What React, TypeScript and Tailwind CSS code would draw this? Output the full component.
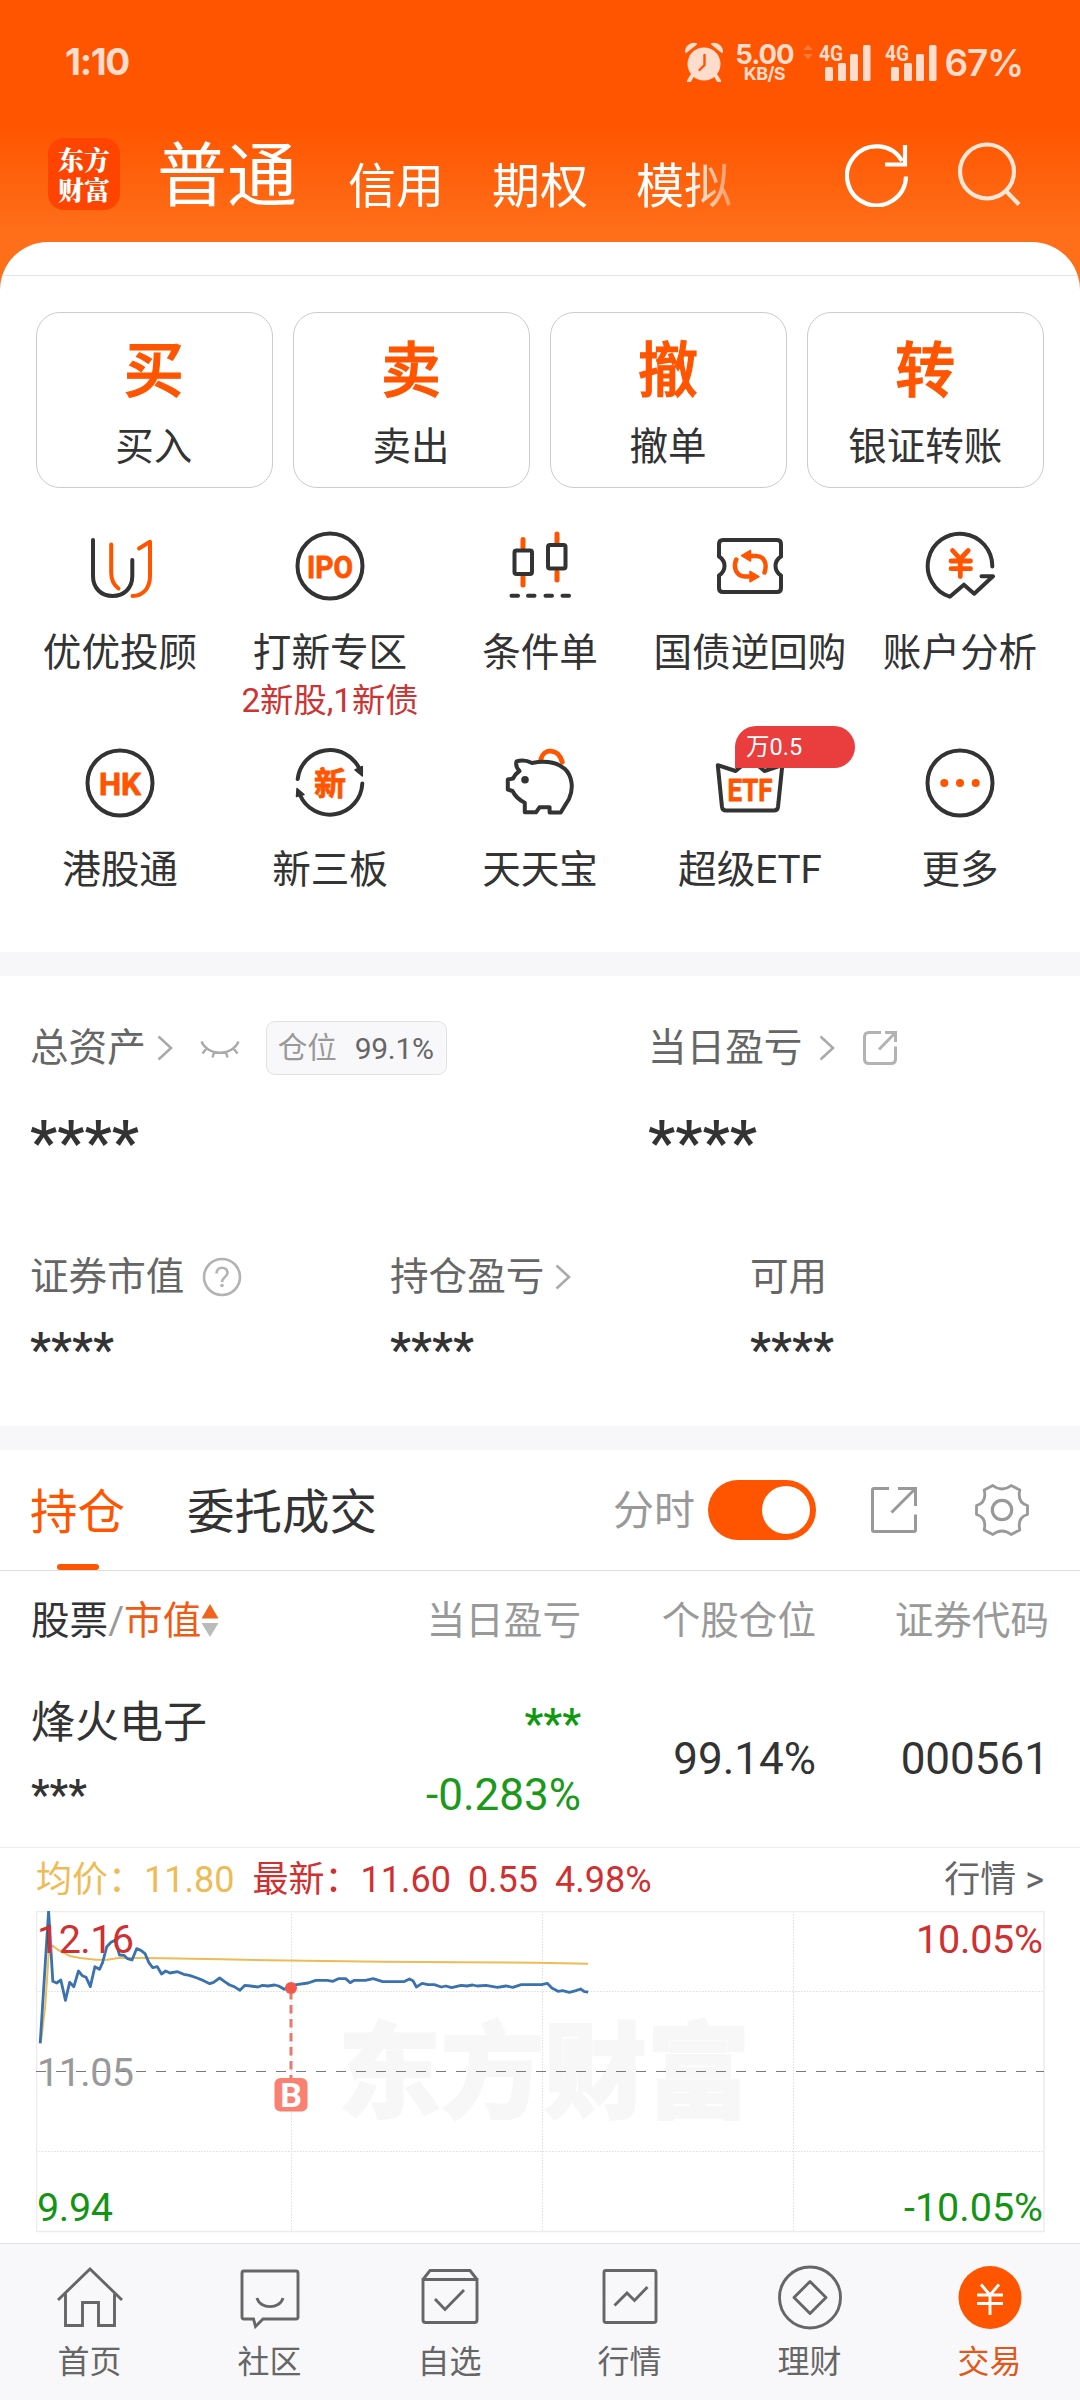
import type { ReactNode } from "react";

const DARK = "#333333";
const ORANGE = "#ff5500";

/* ---------- status bar ---------- */

function AlarmIcon() {
  return (
    <svg width="38" height="40" viewBox="0 0 38 40" fill="none">
      <path d="M7 34l-3 5M31 34l3 5" stroke="#ffdccb" strokeWidth="4" strokeLinecap="round" />
      <path d="M1 10A8 8 0 0 1 11 2ZM37 10A8 8 0 0 0 27 2Z" fill="#ffdccb" stroke="#ffdccb" strokeWidth="2" strokeLinejoin="round" />
      <circle cx="19" cy="22" r="16.5" fill="#ffdccb" />
      <path d="M19.5 13v10l-5 5" stroke="#ff5500" strokeWidth="2.4" strokeLinecap="round" />
    </svg>
  );
}

function Signal() {
  return (
    <svg className="overflow-visible" width="52" height="38" viewBox="0 0 52 38" fill="#ffdccb">
      <text x="0" y="17.5" fontSize="22.5" fontWeight="700" fontFamily="Roboto" textLength="24" lengthAdjust="spacingAndGlyphs">
        4G
      </text>
      <rect x="6" y="24" width="8" height="14" rx="1.5" />
      <rect x="19" y="20" width="8" height="18" rx="1.5" />
      <rect x="31" y="11" width="8" height="27" rx="1.5" />
      <rect x="44" y="2" width="7.5" height="36" rx="1.5" />
    </svg>
  );
}

function StatusBar() {
  return (
    <div className="flex h-[124px] items-center pr-[57px] pl-[65px] font-['Inter'] text-[#ffdccb]">
      <span className="w-[70px] text-[37px] leading-[40px] font-bold tracking-[-1.3px]">1:10</span>
      <div className="ml-auto flex items-center">
        <AlarmIcon />
        <div className="ml-[11px] flex w-[60px] flex-col items-center">
          <span className="text-[27.5px] leading-[24px] font-bold tracking-[-1px]">5.00</span>
          <span className="text-[18px] leading-[16px] font-bold tracking-[-0.6px]">KB/S</span>
        </div>
        <svg className="mt-[-20px] ml-[8px]" width="12" height="16" viewBox="0 0 12 16" fill="#ff7a3c">
          <path d="M6 1l5 5H1ZM6 15l5-5H1Z" />
        </svg>
        <span className="ml-[5px]">
          <Signal />
        </span>
        <span className="ml-[14px]">
          <Signal />
        </span>
        <span className="ml-[7px] pt-[2px] text-[37px] leading-[40px] font-semibold tracking-[-1.2px]">67%</span>
      </div>
    </div>
  );
}

/* ---------- title bar ---------- */

function TitleBar() {
  return (
    <div className="flex h-[100px] items-center pl-[48px] text-white">
      <div className="flex size-[72px] flex-col items-center justify-center rounded-[16px] bg-[#ff4300] font-['Noto_Serif_CJK_SC','Noto_Sans_CJK_SC',sans-serif] text-[26px] leading-[30px] font-black">
        <span>东方</span>
        <span>财富</span>
      </div>
      <span className="ml-[37px] pt-[6px] text-[70px] leading-[94px]">普通</span>
      <div className="mt-[26px] ml-[51px] flex w-[390px] gap-[48px] [mask-image:linear-gradient(to_right,black_340px,transparent_405px)] text-[48px] leading-[78px] whitespace-nowrap">
        <span>信用</span>
        <span>期权</span>
        <span>模拟</span>
      </div>
      <svg className="mt-[2px] ml-[107px]" width="64" height="64" viewBox="0 0 64 64" fill="none" stroke="white" strokeWidth="4.2">
        <path d="M61 33.500A29.500 29.500 0 1 1 57 18" />
        <path d="M60 2v19.500H40" />
      </svg>
      <svg className="ml-[48px]" width="66" height="66" viewBox="0 0 66 66" fill="none" stroke="#ffe6d6" strokeWidth="4.200">
        <circle cx="30" cy="30.500" r="27" />
        <path d="M49 50L62 63.500" />
      </svg>
    </div>
  );
}

/* ---------- trade shortcuts ---------- */

const TRADE = [
  ["买", "买入"],
  ["卖", "卖出"],
  ["撤", "撤单"],
  ["转", "银证转账"],
];

function TradeCards() {
  return (
    <div className="mt-[36px] grid grid-cols-4 gap-[20.500px] px-[36px]">
      {TRADE.map(([glyph, label]) => (
        <div key={label} className="flex h-[176px] flex-col items-center rounded-[24px] border border-[#cccccc] pr-[1px]">
          <span className="mt-[21px] text-[60px] leading-[76px] font-medium text-[#ff5500] [-webkit-text-stroke:1.2px_#ff5500]">{glyph}</span>
          <span className="mt-[10px] text-[38.500px] leading-[54px] text-[#333333]">{label}</span>
        </div>
      ))}
    </div>
  );
}

function Glyph({ children }: { children: ReactNode }) {
  return (
    <svg width="72" height="72" viewBox="0 0 72 72" fill="none" stroke={DARK} strokeWidth="4" strokeLinecap="round" strokeLinejoin="round">
      {children}
    </svg>
  );
}

function IconText({ text, width, baseline, size }: { text: string; width: number; baseline: number; size: number }) {
  return (
    <text
      x={36 - width / 2}
      y={baseline}
      fontSize={size}
      fontWeight="700"
      fontFamily="Roboto, 'Noto Sans CJK SC', sans-serif"
      fill={ORANGE}
      stroke={ORANGE}
      strokeWidth="0.8"
      textLength={width}
      lengthAdjust="spacingAndGlyphs"
    >
      {text}
    </text>
  );
}

const youyou = (
  <Glyph>
    <path d="M9 10V46C9 58 17 66 28.600 66S48.300 58 48.300 46V30" />
    <path d="M27.200 14.500V43C27.200 50 30 55 34.500 58.500M55 18.500L66 11.800V46C66 58 59 66 48.500 66" stroke={ORANGE} />
  </Glyph>
);
const ipo = (
  <Glyph>
    <circle cx="36" cy="36" r="32.500" />
    <IconText text="IPO" width={46} baseline={47.5} size={32} />
  </Glyph>
);
const candles = (
  <Glyph>
    <path d="M19 9.500V18M19 47V55M53 4V13M53 42V50" stroke={ORANGE} strokeWidth="5" />
    <rect x="10.500" y="20.500" width="17.500" height="23.500" rx="2" />
    <rect x="44" y="15" width="17.500" height="23.500" rx="2" />
    <path d="M7.500 65.700H14M24 65.700H30.500M41.500 65.700H48M58.500 65.700H65" />
  </Glyph>
);
const repo = (
  <Glyph>
    <path d="M9 10H63Q67 10 67 14V26.500Q61.500 30 61.500 36T67 45.500V58Q67 62 63 62H9Q5 62 5 58V45.500Q10.500 42 10.500 36T5 26.500V14Q5 10 9 10Z" />
    <path d="M37 26H42C49 26 54 32 50.500 42.500M35 46.500H31C23 46.500 18.500 38 22.300 29.500" stroke={ORANGE} strokeWidth="4.500" />
    <path d="M27.500 25.700L36.500 20.500V31ZM45 46.700L36 41.500V51.800Z" fill={ORANGE} stroke={ORANGE} strokeWidth="1.500" />
  </Glyph>
);
const analysis = (
  <Glyph>
    <path d="M68.300 36.500A32.300 32.300 0 1 0 25.800 66.700L39.900 54.700L50.200 63.700L69 46.300H57.500" />
    <path d="M28.500 20.500L36.300 29L44.200 20.500M27 31H46.500M27 38.700H46.500M36.300 29V46.500" stroke={ORANGE} strokeWidth="4.800" />
  </Glyph>
);
const hk = (
  <Glyph>
    <circle cx="36" cy="36" r="32.500" />
    <IconText text="HK" width={42} baseline={47.5} size={32} />
  </Glyph>
);
const newBoard = (
  <Glyph>
    <path d="M3.700 32A32.500 32.500 0 0 1 65.500 22M68.300 36.500A32.500 32.500 0 0 1 6 48" />
    <path d="M61 23L68.300 19.500V29ZM3 41.500L10 47.500L2.500 49.500Z" fill={DARK} strokeWidth="1.500" />
    <IconText text="新" width={32} baseline={47.5} size={32} />
  </Glyph>
);
const piggy = (
  <Glyph>
    <path d="M37 12C39 2 54 0 58.200 15" stroke={ORANGE} strokeWidth="5" />
    <path d="M12.500 14.500C18 12.800 23 13.500 28 16C44 13 54 16 61 22C68 29 70 41 65 52L56.700 65.500H45.600V60.300H35.500L32 65.300H20.800V55.700C15 53 11 49 8.500 44L3.800 42.500V32.500L9 31.500C10.500 28.500 12.500 26 15.500 24C13 21.500 11.500 18 12.500 14.500Z" />
    <circle cx="21" cy="32.700" r="3.800" fill={DARK} stroke="none" />
  </Glyph>
);
const etf = (
  <Glyph>
    <path d="M3.800 18.200L21.600 24L36 12L50.500 24L68.300 18.200L64 60Q63.500 63.500 60 63.500H12Q8.500 63.500 8 60Z" />
    <IconText text="ETF" width={45} baseline={53.5} size={31} />
  </Glyph>
);
const more = (
  <Glyph>
    <circle cx="36" cy="36" r="32.500" />
    <g fill={ORANGE} stroke="none">
      <circle cx="20.300" cy="36" r="4" />
      <circle cx="36" cy="36" r="4" />
      <circle cx="51.700" cy="36" r="4" />
    </g>
  </Glyph>
);

const SHORTCUTS: { icon: ReactNode; label: string; note?: string; badge?: string }[][] = [
  [
    { icon: youyou, label: "优优投顾" },
    { icon: ipo, label: "打新专区", note: "2新股,1新债" },
    { icon: candles, label: "条件单" },
    { icon: repo, label: "国债逆回购" },
    { icon: analysis, label: "账户分析" },
  ],
  [
    { icon: hk, label: "港股通" },
    { icon: newBoard, label: "新三板" },
    { icon: piggy, label: "天天宝" },
    { icon: etf, label: "超级ETF", badge: "万0.5" },
    { icon: more, label: "更多" },
  ],
];

function Shortcuts() {
  return (
    <div className="mt-[42px] px-[15px]">
      {SHORTCUTS.map((row, i) => (
        <div key={i} className="grid h-[217px] grid-cols-5">
          {row.map((item) => (
            <div key={item.label} className="flex flex-col items-center whitespace-nowrap">
              <div className="relative">
                {item.icon}
                {item.badge && (
                  <span className="absolute top-[-21px] left-[21px] h-[42px] w-[120px] rounded-[21px] rounded-bl-none bg-[#ea3d3d] pl-[11px] text-[23.500px] leading-[43px] text-white">
                    {item.badge}
                  </span>
                )}
              </div>
              <span className="mt-[24px] text-[38.600px] leading-[54px] text-[#333333]">{item.label}</span>
              {item.note && <span className="text-[33.300px] leading-[42px] text-[#cc3333]">{item.note}</span>}
            </div>
          ))}
        </div>
      ))}
    </div>
  );
}

/* ---------- assets ---------- */

function Chevron() {
  return (
    <svg width="16" height="26" viewBox="0 0 16 26" fill="none" stroke="#aaaaaa" strokeWidth="2.600">
      <path d="M1.500 1.500L14 13L1.500 24.500" />
    </svg>
  );
}

function Assets() {
  return (
    <section className="h-[450px] px-[30px] pt-[45px] text-[38.600px] text-[#666666]">
      <div className="flex h-[54px] items-center">
        <div className="flex w-[617px] items-center">
          <span className="mr-[11px] leading-[54px]">总资产</span>
          <Chevron />
          <svg className="mt-[4px] ml-[27px]" width="40" height="20" viewBox="0 0 40 20" fill="none" stroke="#aaaaaa" strokeWidth="2.400">
            <path d="M1.500 1.500C8 16.500 32 16.500 38.500 1.500M6.500 8.500L2.500 13.500M14 12.500L12.500 17.500M26 12.500L27.500 17.500M33.500 8.500L37.500 13.500" />
          </svg>
          <div className="ml-[26px] flex h-[54px] w-[181px] items-center rounded-[9px] border border-[#e2e2e5] bg-[#f8f8fa] pl-[11px] text-[29.500px] whitespace-nowrap">
            <span className="text-[#999999]">仓位</span>
            <span className="ml-[18px] text-[30px] tracking-[-0.3px]">99.1%</span>
          </div>
        </div>
        <span className="mr-[17px] ml-[1px] leading-[54px]">当日盈亏</span>
        <Chevron />
        <svg className="ml-[27px]" width="36" height="36" viewBox="0 0 36 36" fill="none" stroke="#b3b3b3" strokeWidth="3">
          <path d="M19 2.500H7Q2.500 2.500 2.500 7V29Q2.500 33.500 7 33.500H29Q33.500 33.500 33.500 29V16.500M23 2.500H33.500V12M33 3L17 19.500" />
        </svg>
      </div>
      <div className="mt-[38px] flex h-[60px] text-[61.500px] leading-[61px] font-medium text-[#333333]">
        <span className="w-[618px]">****</span>
        <span>****</span>
      </div>
      <div className="mt-[77px] grid grid-cols-[360px_360px_1fr] leading-[54px]">
        <span className="flex items-center">
          证券市值
          <svg className="ml-[18px]" width="40" height="40" viewBox="0 0 40 40" fill="none" stroke="#b3b3b3" strokeWidth="2.600">
            <circle cx="20" cy="20" r="18" />
            <path d="M14.500 16.500C14.500 9 25.500 9 25.500 16C25.500 20 20 20 20 25" />
            <circle cx="20" cy="28.500" r="1.800" fill="#b3b3b3" stroke="none" />
          </svg>
        </span>
        <span className="flex items-center">
          持仓盈亏
          <span className="ml-[11px]">
            <Chevron />
          </span>
        </span>
        <span>可用</span>
      </div>
      <div className="mt-[22px] grid h-[48px] grid-cols-[360px_360px_1fr] text-[47.300px] leading-[48px] font-medium text-[#333333]">
        <span>****</span>
        <span>****</span>
        <span>****</span>
      </div>
    </section>
  );
}

/* ---------- positions ---------- */

function PositionTabs() {
  return (
    <div className="flex h-[121px] items-center border-b border-[#dddddd] pl-[30px] text-[47.500px] leading-[60px] text-[#333333]">
      <div className="relative flex h-full items-center text-[#ff5500]">
        <span className="pt-[5px]">持仓</span>
        <span className="absolute bottom-0 left-[27px] h-[6px] w-[42px] rounded-[3px] bg-[#ff5500]" />
      </div>
      <span className="ml-[62px] pt-[5px]">委托成交</span>
      <span className="ml-auto pt-[2px] text-[41px] text-[#999999]">分时</span>
      <div className="ml-[13px] flex h-[60px] w-[108px] items-center justify-end rounded-full bg-[#ff5500] pr-[6px]">
        <span className="size-[48px] rounded-full bg-white" />
      </div>
      <svg className="ml-[55px]" width="46" height="46" viewBox="0 0 46 46" fill="none" stroke="#999999" strokeWidth="3">
        <path d="M18 1.500H3Q1.500 1.500 1.500 3V43Q1.500 44.500 3 44.500H43Q44.500 44.500 44.500 43V27.500M27 1.500H44.500V19M43.500 2.500L20.500 25.500" />
      </svg>
      <svg className="mr-[50px] ml-[57px]" width="56" height="54" viewBox="-1 -0.5 56 54" fill="none" stroke="#999999" strokeWidth="2.800" strokeLinejoin="round">
        <path d="M17.800 2L9.200 6.500Q12 19 1.500 22V31Q12 34 9.200 46.500L17.800 51Q27 44 36.200 51L44.800 46.500Q42 34 52.500 31V22Q42 19 44.800 6.500L36.200 2Q27 9 17.800 2Z" />
        <circle cx="27" cy="26.500" r="9.700" strokeWidth="3.200" />
      </svg>
    </div>
  );
}

const COLS = "grid grid-cols-[250px_300px_235px_233px] px-[31px]";

function Positions() {
  return (
    <>
      <div className={`${COLS} h-[100px] items-center text-right text-[38.600px] leading-[54px] text-[#999999]`}>
        <span className="flex items-center">
          <span className="text-[#333333]">股票</span>/<span className="text-[#f05a14]">市值</span>
          <svg width="18" height="34" viewBox="0 0 18 34">
            <path d="M9 0L17.500 14.500H0.500Z" fill="#f0641e" />
            <path d="M9 33L17.500 19H0.500Z" fill="#bbbbbb" />
          </svg>
        </span>
        <span>当日盈亏</span>
        <span>个股仓位</span>
        <span>证券代码</span>
      </div>
      <div className={`${COLS} h-[177px] items-center border-b border-[#eeeeee] text-right text-[44px] leading-[72px] text-[#333333]`}>
        <div className="flex flex-col text-left">
          <span className="pt-[1px] leading-[71px]">烽火电子</span>
          <span className="text-[42px] font-medium">***</span>
        </div>
        <div className="flex flex-col pt-px text-[#1a991a]">
          <span className="text-[42.500px] leading-[70px] font-medium text-[#0f990f]">***</span>
          <span>-0.283%</span>
        </div>
        <span>99.14%</span>
        <span>000561</span>
      </div>
    </>
  );
}

/* ---------- intraday chart ---------- */

const PRICE =
  "105,610 127,213 138,424 148,429 159,420 171,481 182,427 193,440 205,393 215,407 225,412 236,440 248,380 260,388 268,368 279,320 290,307 302,300 312,345 324,346 333,356 345,360 357,326 368,331 379,341 389,368 399,383 411,380 422,402 433,393 444,399 464,395 480,403 495,406 515,414 532,422 548,431 558,427 574,414 586,424 600,435 612,440 627,451 640,436 655,438 674,441 686,436 700,438 718,435 728,438 743,448 760,437 775,434 805,429 825,421 855,421 870,424 884,416 903,416 915,428 926,421 955,421 975,416 1000,425 1055,425 1070,417 1079,422 1088,441 1103,430 1118,434 1135,434 1153,441 1165,438 1180,443 1205,436 1220,438 1235,435 1247,438 1270,436 1300,442 1322,438 1340,442 1362,434 1415,434 1430,430 1442,444 1458,454 1470,452 1488,457 1505,452 1517,447 1527,455 1537,456";
const AVERAGE =
  "107,606 118,500 128,330 138,317 152,330 165,337 182,348 210,354 250,359 280,359 310,354 360,354 430,355 500,356 580,358 700,361 850,363 1000,365 1200,367 1400,368 1537,371";

function Chart() {
  return (
    <svg className="mx-[36px] block" width="1009" height="322" viewBox="0 0 1009 322" fill="none" fontFamily="Roboto" fontSize="39.500">
      <text
        x="302"
        y="199"
        fontFamily="'Noto Sans CJK SC', sans-serif"
        fontSize="104"
        fontWeight="900"
        fill="#f7f7f7"
        stroke="#f7f7f7"
        strokeWidth="2"
        textLength="412"
        lengthAdjust="spacingAndGlyphs"
      >
        东方财富
      </text>
      <path d="M0 80.500H1008M0 240.500H1008M255.500 0V320M506.500 0V320M757.500 0V320" stroke="#dddddd" strokeWidth="1" strokeDasharray="1.500 1.500" />
      <rect x="0.500" y="0.500" width="1007.500" height="320" stroke="#ececec" strokeWidth="1.500" />
      <path d="M0 160.500H1008" stroke="#7a7a7a" strokeWidth="1" strokeDasharray="10 10" />
      <text x="1" y="175" fill="#999999" textLength="97">
        11.05
      </text>
      <g transform="translate(-36 -71) scale(0.3827 0.33333)" strokeLinejoin="round">
        <polyline points={AVERAGE} stroke="#eebb55" strokeWidth="2" vectorEffect="non-scaling-stroke" />
        <polyline points={PRICE} stroke="#3a72b0" strokeWidth="2.800" vectorEffect="non-scaling-stroke" />
      </g>
      <g fill="#cf3030">
        <text x="1" y="42" textLength="97">
          12.16
        </text>
        <text x="880" y="42" textLength="127">
          10.05%
        </text>
      </g>
      <g fill="#149414">
        <text x="1" y="310" textLength="76">
          9.94
        </text>
        <text x="868" y="310" textLength="139">
          -10.05%
        </text>
      </g>
      <path d="M255 80V168" stroke="#e8796c" strokeWidth="3" strokeDasharray="8.500 5.500" />
      <circle cx="255" cy="77" r="6" fill="#f2594b" />
      <rect x="238.500" y="167" width="33" height="33.500" rx="6" fill="#fa8072" />
      <text x="255" y="196" textAnchor="middle" fontSize="34" fontWeight="700" fill="white">
        B
      </text>
    </svg>
  );
}

function Quote() {
  return (
    <>
      <div className="flex h-[63px] items-center px-[36px] text-[36px] leading-[61px] whitespace-nowrap text-[#d03030]">
        <span className="pt-[2px] text-[#eebb55]">均价：11.80</span>
        <span className="ml-[18px] pt-[2px]">最新：11.60</span>
        <span className="ml-[17px] pt-[2px]">0.55</span>
        <span className="ml-[17px] pt-[2px]">4.98%</span>
        <span className="ml-auto pt-[2px] text-[#666666]">行情 &gt;</span>
      </div>
      <Chart />
    </>
  );
}

/* ---------- bottom navigation ---------- */

const NAV: { label: string; icon: ReactNode }[] = [
  {
    label: "首页",
    icon: <path d="M2 35L34 4L66 35M9.500 29V60.500H26.500V37.500H42.500V60.500H58.500V29" />,
  },
  {
    label: "社区",
    icon: <path d="M8 6H60Q62 6 62 8V52Q62 54 60 54H27L19.500 61.500L17.500 54H8Q6 54 6 52V8Q6 6 8 6ZM21 33C24 44.500 44 44.500 47 33" />,
  },
  {
    label: "自选",
    icon: <path d="M7 14.500H61V55Q61 57.500 58.500 57.500H9.500Q7 57.500 7 55ZM7 14.500L14 5.500H54L61 14.500M19 34L29 44.500L48 25" />,
  },
  {
    label: "行情",
    icon: <path d="M10 5.500H58Q60 5.500 60 7.500V55.500Q60 57.500 58 57.500H10Q8 57.500 8 55.500V7.500Q8 5.500 10 5.500ZM18.500 40.500L31 28L38.500 35.500L51.500 22" />,
  },
  {
    label: "理财",
    icon: (
      <>
        <circle cx="34" cy="32.500" r="30.500" />
        <path d="M34 16.500L50 32.500L34 48.500L18 32.500Z" strokeLinejoin="round" />
      </>
    ),
  },
  {
    label: "交易",
    icon: (
      <>
        <circle cx="34" cy="32.500" r="31.500" fill={ORANGE} stroke="none" />
        <path d="M25 19.500L34 30L43 19.500M21 30H47M21 38.500H47M34 30V50" stroke="white" />
      </>
    ),
  },
];

function BottomNav() {
  return (
    <nav className="grid h-[157px] grid-cols-6 border-t border-[#e0e0e0] bg-[#f8f8fa] pt-[21px]">
      {NAV.map(({ label, icon }, i) => (
        <div key={label} className="flex flex-col items-center pr-px">
          <svg width="68" height="66" viewBox="0 0 68 66" fill="none" stroke="#666666" strokeWidth="2.900">
            {icon}
          </svg>
          <span className={`mt-[10px] text-[32px] leading-[42px] ${i === 5 ? "text-[#e0591a]" : "text-[#666666]"}`}>{label}</span>
        </div>
      ))}
    </nav>
  );
}

export default function App() {
  return (
    <div className="flex h-[2400px] w-[1080px] flex-col overflow-hidden bg-[linear-gradient(to_bottom,#ff5500_0px,#ff5500_125px,#ff6f1a_235px,#ff6f1a_300px)] font-['Roboto','Noto_Sans_CJK_SC',sans-serif]">
      <header className="h-[242px]">
        <StatusBar />
        <TitleBar />
      </header>
      <main className="h-[2001px] rounded-t-[48px] bg-white">
        <section className="h-[710px] pt-[33px]">
          <div className="mx-[3px] h-px bg-[#e4e4e4]" />
          <TradeCards />
          <Shortcuts />
        </section>
        <div className="h-[24px] bg-[#f7f7fa]" />
        <Assets />
        <div className="h-[24px] bg-[#f7f7fa]" />
        <PositionTabs />
        <Positions />
        <Quote />
      </main>
      <BottomNav />
    </div>
  );
}
